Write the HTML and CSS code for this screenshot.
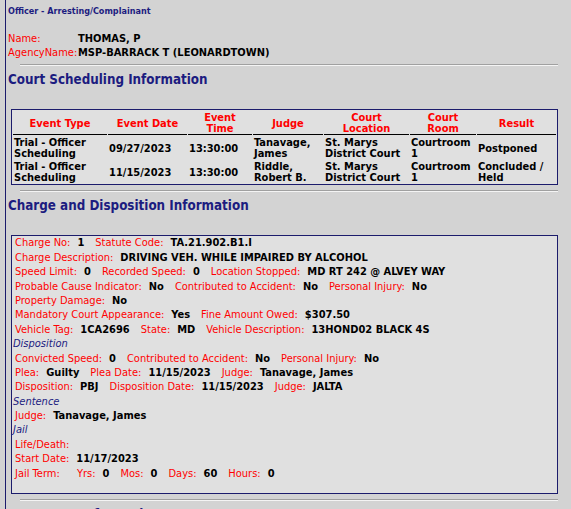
FILE: index.html
```html
<!DOCTYPE html>
<html>
<head>
<meta charset="utf-8">
<link rel="stylesheet" href="styles.css">
</head>
<body>
<div class="page">
  <div class="subhead">Officer - Arresting/Complainant</div>
  <div class="party">
    <span class="l">Name:</span><span class="v">THOMAS, P</span>
    <span class="l">AgencyName:</span><span class="v">MSP-BARRACK T (LEONARDTOWN)</span>
  </div>
  <hr>
  <h2>Court Scheduling Information</h2>
  <div class="box">
    <table class="sched">
      <colgroup>
        <col class="c1"><col class="c2"><col class="c3"><col class="c4"><col class="c5"><col class="c6"><col class="c7">
      </colgroup>
      <thead>
        <tr><th>Event Type</th><th>Event Date</th><th>Event<br>Time</th><th>Judge</th><th>Court<br>Location</th><th>Court<br>Room</th><th>Result</th></tr>
      </thead>
      <tbody>
        <tr><td>Trial - Officer Scheduling</td><td>09/27/2023</td><td>13:30:00</td><td>Tanavage, James</td><td>St. Marys District Court</td><td>Courtroom 1</td><td>Postponed</td></tr>
        <tr><td>Trial - Officer Scheduling</td><td>11/15/2023</td><td>13:30:00</td><td>Riddle, Robert B.</td><td>St. Marys District Court</td><td>Courtroom 1</td><td>Concluded / Held</td></tr>
      </tbody>
    </table>
  </div>
  <hr>
  <h2>Charge and Disposition Information</h2>
  <div class="box charge">
    <div class="row"><span class="l">Charge No:</span><span class="v">1</span><span class="l">Statute Code:</span><span class="v">TA.21.902.B1.I</span></div>
    <div class="row"><span class="l">Charge Description:</span><span class="v">DRIVING VEH. WHILE IMPAIRED BY ALCOHOL</span></div>
    <div class="row"><span class="l">Speed Limit:</span><span class="v">0</span><span class="l">Recorded Speed:</span><span class="v">0</span><span class="l">Location Stopped:</span><span class="v">MD RT 242 @ ALVEY WAY</span></div>
    <div class="row"><span class="l">Probable Cause Indicator:</span><span class="v">No</span><span class="l">Contributed to Accident:</span><span class="v">No</span><span class="l">Personal Injury:</span><span class="v">No</span></div>
    <div class="row"><span class="l">Property Damage:</span><span class="v">No</span></div>
    <div class="row"><span class="l">Mandatory Court Appearance:</span><span class="v">Yes</span><span class="l">Fine Amount Owed:</span><span class="v">$307.50</span></div>
    <div class="row"><span class="l">Vehicle Tag:</span><span class="v">1CA2696</span><span class="l">State:</span><span class="v">MD</span><span class="l">Vehicle Description:</span><span class="v">13HOND02 BLACK 4S</span></div>
    <div class="row sect">Disposition</div>
    <div class="row"><span class="l">Convicted Speed:</span><span class="v">0</span><span class="l">Contributed to Accident:</span><span class="v">No</span><span class="l">Personal Injury:</span><span class="v">No</span></div>
    <div class="row"><span class="l">Plea:</span><span class="v">Guilty</span><span class="l">Plea Date:</span><span class="v">11/15/2023</span><span class="l">Judge:</span><span class="v">Tanavage, James</span></div>
    <div class="row"><span class="l">Disposition:</span><span class="v">PBJ</span><span class="l">Disposition Date:</span><span class="v">11/15/2023</span><span class="l">Judge:</span><span class="v">JALTA</span></div>
    <div class="row sect">Sentence</div>
    <div class="row"><span class="l">Judge:</span><span class="v">Tanavage, James</span></div>
    <div class="row sect">Jail</div>
    <div class="row"><span class="l">Life/Death:</span></div>
    <div class="row"><span class="l">Start Date:</span><span class="v">11/17/2023</span></div>
    <div class="row"><span class="l term">Jail Term:</span><span class="l">Yrs:</span><span class="v">0</span><span class="l">Mos:</span><span class="v">0</span><span class="l">Days:</span><span class="v">60</span><span class="l">Hours:</span><span class="v">0</span></div>
  </div>
  <hr>
  <h2>Document Information</h2>
</div>
</body>
</html>
```

FILE: styles.css
```css
html, body {
  margin: 0;
  padding: 0;
}
body {
  background: #d3d3d3;
  font-family: "DejaVu Sans Condensed", "DejaVu Sans", sans-serif;
  font-size: 11px;
  color: #000;
}
.page {
  margin-left: 5px;
  border-left: 1px solid #1c1c6c;
  padding: 0 13px 0 2px;
  min-height: 100vh;
  box-sizing: border-box;
}
.subhead {
  font-weight: bold;
  color: #1c1c80;
  font-size: 9px;
  line-height: 12px;
  padding-top: 5px;
}
.party {
  display: grid;
  grid-template-columns: 70px 1fr;
  line-height: 13.7px;
  margin-top: 15px;
}
.l {
  color: #ff0000;
  margin-right: 7px;
}
.v {
  font-weight: bold;
  margin-right: 11px;
}
.party .l, .party .v {
  margin-right: 0;
}
hr {
  border: 0;
  border-top: 1px solid #a0a0a0;
  border-bottom: 1px solid #f4f4f4;
  height: 0;
  margin: 5px 0 0 12px;
}
h2 {
  font-size: 13.3px;
  font-weight: bold;
  color: #1c1c80;
  line-height: 16px;
  margin: 6px 0 21px 0;
}
.box {
  margin-left: 3px;
  border: 1px solid #1c1c6c;
  background: #e0e0e0;
}
.sched {
  width: 100%;
  table-layout: fixed;
  border-spacing: 1px;
}
.c1 { width: 94px; }
.c2 { width: 79px; }
.c3 { width: 64px; }
.c4 { width: 70px; }
.c5 { width: 85px; }
.c6 { width: 66px; }
.c7 { width: 79px; }
.sched th {
  color: #ff0000;
  font-weight: bold;
  line-height: 11px;
  padding: 1px 1px 0;
  border-bottom: 1px solid #000;
  text-align: center;
  vertical-align: middle;
}
.sched td {
  font-weight: bold;
  line-height: 11px;
  padding: 1px 1px 0;
  text-align: left;
  vertical-align: middle;
}
.charge {
  padding: 1px 4px 11px 1px;
}
.row {
  line-height: 12px;
  padding-left: 2px;
  padding-bottom: 2.4px;
  white-space: nowrap;
}
.row.sect {
  padding-left: 0;
  font-style: italic;
  color: #1c1c80;
}
.term {
  display: inline-block;
  width: 55px;
}
```
